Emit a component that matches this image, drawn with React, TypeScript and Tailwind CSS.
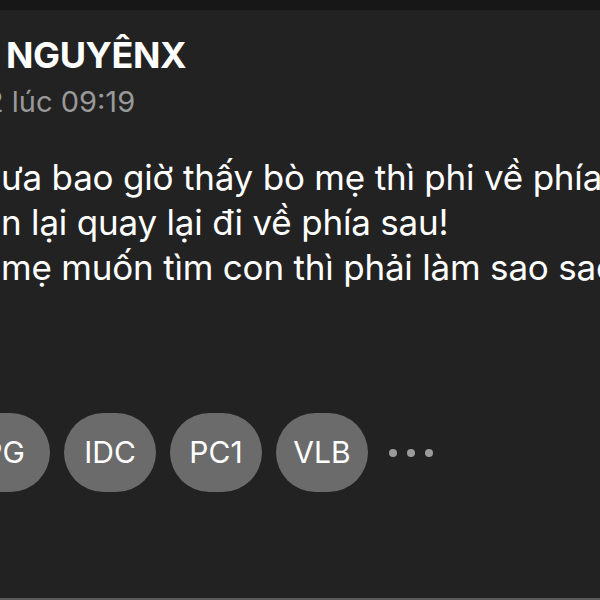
import React from 'react';

const tags = ['PG', 'IDC', 'PC1', 'VLB'];

const lines = [
  'ưa bao giờ thấy bò mẹ thì phi về phía trước,',
  'n lại quay lại đi về phía sau!',
  'mẹ muốn tìm con thì phải làm sao sao?',
];

export default function App() {
  return (
    <div className="w-[600px] h-[600px] overflow-hidden bg-[#222222] flex flex-col font-['Inter','Liberation_Sans',sans-serif]">
      <div className="h-[10px] shrink-0 bg-[#171717]" />

      <div className="flex-1 flex flex-col overflow-hidden">
        {/* author */}
        <div className="mt-[23px] ml-[6px] text-[36px] leading-[44px] font-bold tracking-[-0.4px] text-white whitespace-nowrap">
          NGUYÊNX
        </div>
        <div className="mt-[8px] -ml-[14px] text-[29px] leading-[34px] text-[#999999] whitespace-nowrap">
          2 lúc 09:19
        </div>

        {/* body */}
        <div className="mt-[36px] ml-[1px] text-[35px] leading-[45px] tracking-[-0.2px] text-white">
          {lines.map(l => (
            <div key={l} className="whitespace-nowrap">{l}</div>
          ))}
        </div>

        {/* tags */}
        <div className="mt-[123px] -ml-[42px] flex items-center gap-[14px]">
          {tags.map(t => (
            <div
              key={t}
              className="w-[92px] h-[79px] shrink-0 rounded-full bg-[#6b6b6b] flex items-center justify-center text-[30px] text-white"
            >
              {t}
            </div>
          ))}
          <div className="ml-[7px] flex items-center gap-[10px]">
            <span className="w-[8px] h-[8px] rounded-full bg-[#9a9a9a]" />
            <span className="w-[8px] h-[8px] rounded-full bg-[#9a9a9a]" />
            <span className="w-[8px] h-[8px] rounded-full bg-[#9a9a9a]" />
          </div>
        </div>
      </div>

      <div className="h-[2px] shrink-0 bg-[#5a5a5a]" />
    </div>
  );
}
